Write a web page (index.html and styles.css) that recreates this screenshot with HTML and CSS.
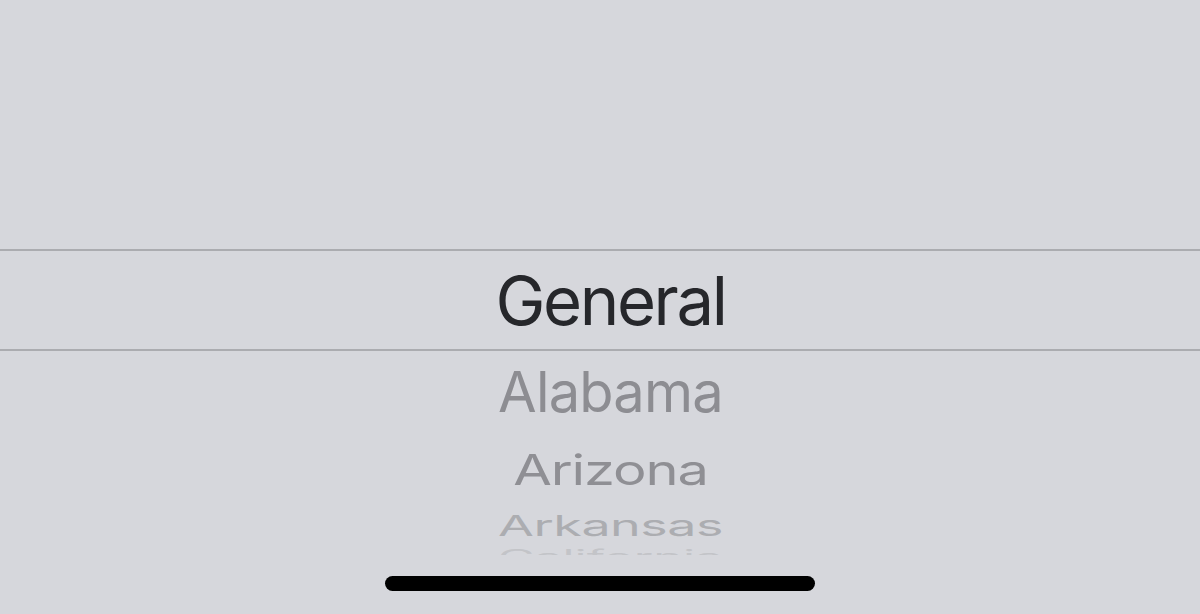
FILE: index.html
```html
<!DOCTYPE html>
<html lang="en">
<head>
    <meta charset="UTF-8">
    <meta name="viewport" content="width=device-width, initial-scale=1.0">
    <title>Picker</title>
    <link rel="stylesheet" href="styles.css">
</head>
<body>
    <div class="screen">
        <div class="top"></div>

        <!-- Wheel picker -->
        <div class="wheel">
            <div class="row selected"><span>General</span></div>
            <div class="list">
                <div class="row item-1"><span>Alabama</span></div>
                <div class="row item-2"><span>Arizona</span></div>
                <div class="row item-3"><span>Arkansas</span></div>
                <div class="row item-4"><span>California</span></div>
            </div>
        </div>

        <div class="home">
            <div class="home-indicator"></div>
        </div>
    </div>
</body>
</html>
```

FILE: styles.css
```css
* {
    margin: 0;
    padding: 0;
    box-sizing: border-box;
}
body {
    background: #d6d7dc;
    font-family: 'Inter', 'Liberation Sans', sans-serif;
    overflow: hidden;
}
.screen {
    height: 614px;
    display: flex;
    flex-direction: column;
}
.top {
    height: 249px;
}
.row {
    display: flex;
    justify-content: center;
    align-items: center;
    padding-left: 21px;
    line-height: 1;
    white-space: nowrap;
}
.row span {
    display: block;
    transform-origin: center;
}
.selected {
    height: 102px;
    border-top: 2px solid #abacb0;
    border-bottom: 2px solid #abacb0;
    color: #26272b;
    font-size: 67px;
    letter-spacing: -2.4px;
}
.list {
    height: 204px;
    overflow: hidden;
}
.item-1 {
    height: 81px;
    color: #8d8d92;
    font-size: 56px;
    letter-spacing: -0.8px;
}
.item-2 {
    height: 75px;
    color: #8f8f94;
    font-size: 56px;
    letter-spacing: -1.1px;
}
.item-2 span {
    transform: scaleY(0.76);
}
.item-3 {
    height: 37px;
    color: #acadb1;
    font-size: 52px;
    letter-spacing: -0.5px;
}
.item-3 span {
    transform: scaleY(0.55);
}
.item-4 {
    height: 26px;
    color: #c3c4c8;
    font-size: 50px;
    letter-spacing: 0;
}
.item-4 span {
    transform: scaleY(0.4);
}
/* Home indicator */
.home {
    display: flex;
    justify-content: center;
    padding-top: 21px;
}
.home-indicator {
    width: 430px;
    height: 15px;
    border-radius: 8px;
    background: #000;
}
```
